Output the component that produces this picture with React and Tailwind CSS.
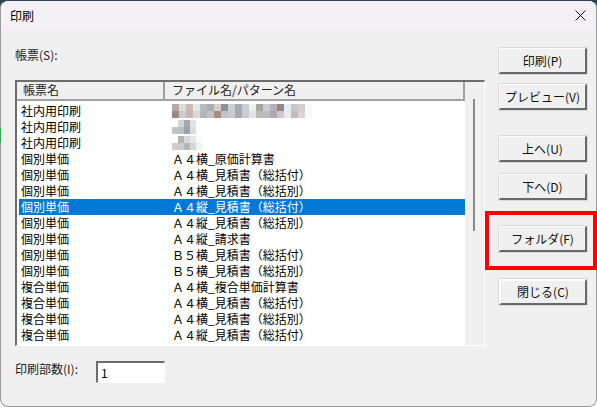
import React from 'react';

const rows = [
    ['社内用印刷', null],
    ['社内用印刷', null],
    ['社内用印刷', null],
    ['個別単価', 'Ａ４横_原価計算書'],
    ['個別単価', 'Ａ４横_見積書（総括付）'],
    ['個別単価', 'Ａ４横_見積書（総括別）'],
    ['個別単価', 'Ａ４縦_見積書（総括付）'],
    ['個別単価', 'Ａ４縦_見積書（総括別）'],
    ['個別単価', 'Ａ４縦_請求書'],
    ['個別単価', 'Ｂ５横_見積書（総括付）'],
    ['個別単価', 'Ｂ５横_見積書（総括別）'],
    ['複合単価', 'Ａ４横_複合単価計算書'],
    ['複合単価', 'Ａ４横_見積書（総括付）'],
    ['複合単価', 'Ａ４横_見積書（総括別）'],
    ['複合単価', 'Ａ４縦_見積書（総括付）'],
];

// blurred-out file names in the first three rows
const mosaics = [
    [
        ['#b5a9a8', '#dcdcdc', '#c4bdb8', '#e6e6e6', '#b8bcc0', '#a9aeb4', '#d8d0c8', '#8f8f98', '#c8d0d0', '#a8a8b8', '#c8ccd4', '#eef0f0', '#a8a49c', '#c8ccd0', '#b8b0b8', '#8f8a80', '#e0eef8', '#c8c8c8', '#d0ccd0', '#f4f8fc'],
        ['#9a8884', '#c8ccd0', '#c4b8b0', '#d8d8d8', '#b0b4b8', '#c0c4c4', '#a88c84', '#c0c4c0', '#c8c8d0', '#a8a8b0', '#d0c8d0', '#e0e4e4', '#c0bcb8', '#b8bcc0', '#b0a8b0', '#d0c8cc', '#e8ecf0', '#c0bcb8', '#dcd4d8', '#f8fafc'],
    ],
    [
        ['#ffffff', '#d8d4d0', '#a8a8b0', '#e0e4e8'],
        ['#c4c4c4', '#c0c0c0', '#a0a0a8', '#d8dce4'],
    ],
    [
        ['#ffffff', '#b0b4b4', '#dcd8d4', '#e0e8e8', '#f8fbfb'],
        ['#d8c8c8', '#c8ccd0', '#b4b4b4', '#d0d8dc', '#eef4f4'],
    ],
];

const Mosaic = ({ cells, wide }) => (
    <div className="flex flex-col">
        {cells.map((line, i) => (
            <div key={i} className="flex">
                {line.map((c, j) => (
                    <div key={j} className={`h-[7px] ${wide ? 'w-[7px]' : 'w-[6px]'}`} style={{ backgroundColor: c }}></div>
                ))}
            </div>
        ))}
    </div>
);

const Btn = ({ children, className = '' }) => (
    <button className={`w-[88px] h-[26px] flex items-center justify-center bg-[#f0f0f0] border border-t-white border-l-white border-r-[#696969] border-b-[#696969] border-r-2 border-b-2 shadow-[0_0_0_0.5px_#c4c4c4] text-xs leading-4 text-[#111] ${className}`}>
        {children}
    </button>
);

export default function App() {
    return (
        <div className="relative w-[597px] h-[407px] overflow-hidden bg-[linear-gradient(#2c4454_50%,#ffffff_50%)] font-['Noto_Sans_CJK_JP',sans-serif] text-xs text-black">
            <div className="w-full h-full flex flex-col rounded-[8px] overflow-hidden bg-[#f0f0f0] border-t border-t-[#2c4454] border-x border-x-[#9a9a9a] border-b border-b-[#9a9a9a]">
                {/* title bar */}
                <div className="h-[30px] shrink-0 flex items-center justify-between pl-[9px] pr-[10px] pb-[1px] bg-[#f3f1f5]">
                    <span className="leading-4">印刷</span>
                    <svg width="11" height="11" viewBox="0 0 11 11" fill="none" stroke="#111" strokeWidth="1">
                        <path d="M0.5 0.5 L10.5 10.5 M10.5 0.5 L0.5 10.5" />
                    </svg>
                </div>

                <div className="flex flex-1 pl-[14px]">
                    <div className="w-[470px] shrink-0">
                        <div className="mt-4 h-4 leading-4 text-[#222]">帳票(S):</div>

                        {/* list */}
                        <div className="mt-[17px] h-[266px] flex border-t-2 border-l-2 border-t-[#6d6d6d] border-l-[#6d6d6d] border-r border-b border-r-white border-b-white">
                            <div className="w-[448px] shrink-0 flex flex-col">
                                <div className="h-[19px] shrink-0 flex text-[#222] leading-4">
                                    <div className="w-[148px] pl-[6px] border-r-2 border-b-2 border-[#a0a0a0] bg-[#f0f0f0]">帳票名</div>
                                    <div className="flex-1 pl-[7px] border-r-2 border-b-2 border-[#a0a0a0] bg-[#f0f0f0]">ファイル名/パターン名</div>
                                </div>
                                <div className="flex-1 bg-white pt-[2px] pl-[2px]">
                                    {rows.map((r, i) => (
                                        <div key={i} className={`h-4 flex items-center leading-4 ${i === 6 ? 'bg-[#0078d7] text-white' : ''}`}>
                                            <div className="w-[153px] pl-[2px] shrink-0">{r[0]}</div>
                                            {r[1] ? r[1] : <Mosaic cells={mosaics[i]} wide={i === 0} />}
                                        </div>
                                    ))}
                                </div>
                            </div>
                            {/* scrollbar */}
                            <div className="flex-1 pl-2 pt-[17px]">
                                <div className="w-[2px] h-[132px] bg-[#8a8a8a]"></div>
                            </div>
                        </div>

                        <div className="mt-[15px] flex items-start">
                            <span className="w-[81px] leading-4 text-[#222]">印刷部数(I):</span>
                            <div className="w-[69px] h-[22px] flex items-center pl-[3px] bg-white border-t-2 border-l-2 border-t-[#6d6d6d] border-l-[#6d6d6d] border-r border-b border-r-white border-b-white leading-4">1</div>
                        </div>
                    </div>

                    {/* buttons */}
                    <div className="ml-[14px] flex flex-col pt-[17px]">
                        <Btn>印刷(P)</Btn>
                        <Btn className="mt-[10px]">プレビュー(V)</Btn>
                        <Btn className="mt-[26px]">上へ(U)</Btn>
                        <Btn className="mt-3">下へ(D)</Btn>
                        <Btn className="mt-[26px]">フォルダ(F)</Btn>
                        <Btn className="mt-[27px] border-2 border-t-[#6d6d6d] border-l-[#6d6d6d] border-r-[#6d6d6d] border-b-[#6d6d6d]">閉じる(C)</Btn>
                    </div>
                </div>
            </div>

            {/* red annotation frame */}
            <div className="absolute left-[485px] top-[211px] w-[112px] h-[59px] border-4 border-[#ff0000]"></div>
            {/* bit of the desktop behind the window edge */}
            <div className="absolute left-0 top-[128px] w-[1px] h-[15px] bg-[#22b14c]"></div>
        </div>
    );
}
